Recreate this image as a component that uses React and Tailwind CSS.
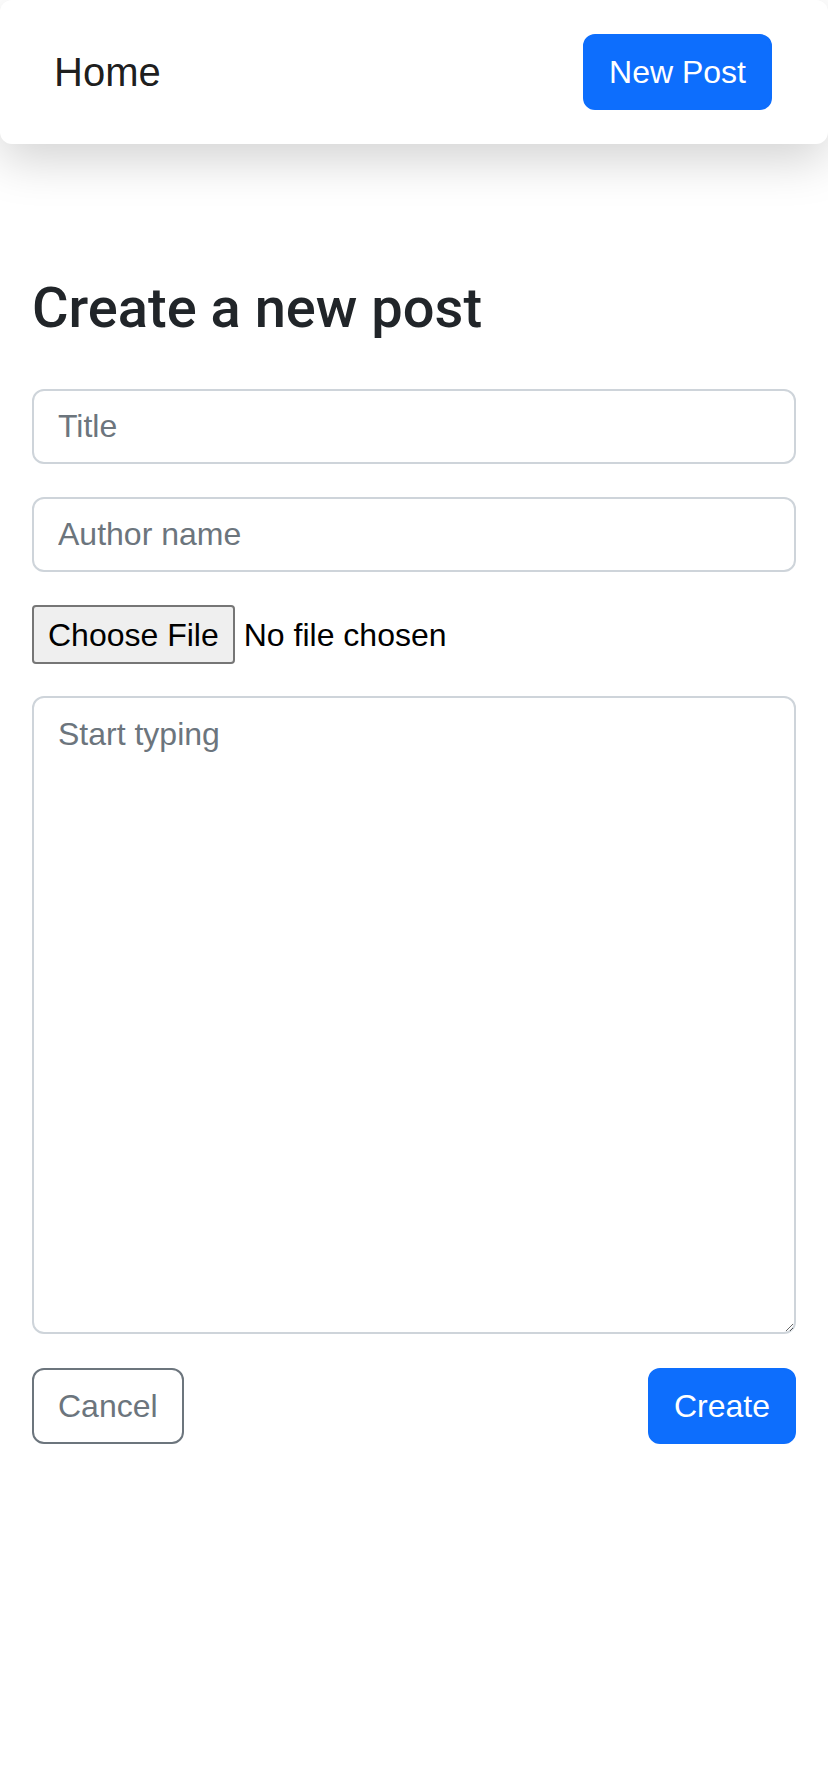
import React from 'react';

export default function App() {
  return (
    <div className="min-h-[1792px] bg-white font-['Liberation_Sans',Arial,sans-serif] text-[#212529]">
      <nav className="flex h-[144px] items-center justify-between rounded-[12px] bg-white pl-[54px] pr-[56px] shadow-[0_16px_48px_rgba(0,0,0,0.175)]">
        <a href="#" className="text-[40px] leading-[60px] text-black/90">Home</a>
        <button className="h-[76px] rounded-[12px] border-2 border-[#0d6efd] bg-[#0d6efd] px-[24px] text-[32px] leading-[48px] text-white">
          New Post
        </button>
      </nav>

      <main className="px-[32px] pt-[131px]">
        <h1 className="mb-[47px] font-['Roboto','Liberation_Sans',sans-serif] text-[56px] font-medium leading-[67px] text-[#212529]">
          Create a new post
        </h1>

        <form className="flex flex-col" onSubmit={(e) => e.preventDefault()}>
          <input
            type="text"
            placeholder="Title"
            className="mb-[33px] h-[75px] w-full rounded-[12px] border-2 border-[#ced4da] px-[24px] text-[32px] leading-[48px] text-[#212529] outline-none placeholder:text-[#6c757d]"
          />
          <input
            type="text"
            placeholder="Author name"
            className="mb-[33px] h-[75px] w-full rounded-[12px] border-2 border-[#ced4da] px-[24px] text-[32px] leading-[48px] text-[#212529] outline-none placeholder:text-[#6c757d]"
          />

          <div className="mb-[32px] flex items-center">
            <button type="button" className="h-[59px] rounded-[4px] border-2 border-[#767676] bg-[#efefef] px-[14px] text-[32px] leading-[40px] text-black">
              Choose File
            </button>
            <span className="ml-[9px] text-[32px] leading-[40px] text-black">No file chosen</span>
          </div>

          <textarea
            placeholder="Start typing"
            className="mb-[34px] h-[638px] w-full rounded-[12px] border-2 border-[#ced4da] px-[24px] py-[12px] text-[32px] leading-[48px] text-[#212529] outline-none placeholder:text-[#6c757d]"
          />

          <div className="flex items-center justify-between">
            <button type="button" className="h-[76px] rounded-[12px] border-2 border-[#6c757d] bg-white px-[24px] text-[32px] leading-[48px] text-[#6c757d]">
              Cancel
            </button>
            <button type="submit" className="h-[76px] rounded-[12px] border-2 border-[#0d6efd] bg-[#0d6efd] px-[24px] text-[32px] leading-[48px] text-white">
              Create
            </button>
          </div>
        </form>
      </main>
    </div>
  );
}
